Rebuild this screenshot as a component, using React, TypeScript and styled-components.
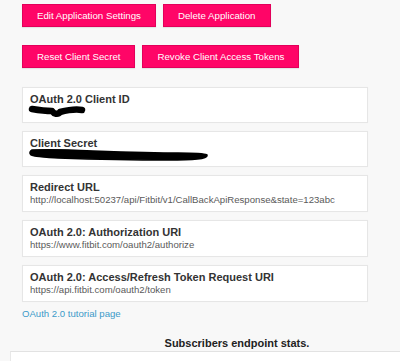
import React from 'react';
import styled, { createGlobalStyle } from 'styled-components';

const GlobalStyle = createGlobalStyle`
  html, body {
    margin: 0;
    padding: 0;
    background: #f8f8f8;
    font-family: "Liberation Sans", Arial, sans-serif;
  }
`;

const Page = styled.div`
  width: 400px;
  height: 361px;
  overflow: hidden;
  padding-left: 10px;
  box-sizing: border-box;
`;

const Content = styled.div`
  padding: 4px 0 0 12px;
`;

const ButtonRow = styled.div`
  display: flex;
  gap: 7px;
  margin-bottom: ${(p: { $gap?: number }) => p.$gap ?? 0}px;
`;

const PinkButton = styled.button`
  height: 23px;
  padding: 0 14px;
  background: #ff0567;
  border: 1px solid #e2005a;
  border-radius: 0;
  color: #fff;
  font-family: "Liberation Sans", Arial, sans-serif;
  font-size: 9.7px;
  line-height: 21px;
  cursor: pointer;
  box-shadow: 0 1px 1px rgba(0, 0, 0, 0.08);
`;

const CardList = styled.div`
  display: flex;
  flex-direction: column;
  gap: 8px;
  width: 346px;
  margin-top: 19px;
`;

const Card = styled.div`
  background: #fff;
  border: 1px solid #e6e6e6;
  padding: 5px 7px 6px;
  box-shadow: 0 0 1px rgba(0, 0, 0, 0.04);
`;

const CardTitle = styled.div`
  font-size: 11px;
  line-height: 13px;
  font-weight: bold;
  color: #333;
`;

const CardValue = styled.div`
  font-size: 9.6px;
  line-height: 11px;
  color: #5a5a5a;
  white-space: nowrap;
`;

const Redacted = styled.svg`
  display: block;
  overflow: visible;
  margin-left: -2px;
`;

const TutorialLink = styled.a`
  display: inline-block;
  margin-top: 6px;
  font-size: 9.6px;
  line-height: 11px;
  color: #3c9ac8;
  text-decoration: none;
`;

const StatsHeading = styled.div`
  margin-top: 16px;
  padding-left: 64px;
  text-align: center;
  font-size: 11px;
  line-height: 13px;
  font-weight: bold;
  color: #222;
`;

const StatsBox = styled.div`
  margin-top: 1px;
  height: 40px;
  background: #fff;
  border-top: 1px solid #e2e2e2;
  border-left: 1px solid #e8e8e8;
`;

const uris = [
  { title: 'Redirect URL', value: 'http://localhost:50237/api/Fitbit/v1/CallBackApiResponse&state=123abc' },
  { title: 'OAuth 2.0: Authorization URI', value: 'https://www.fitbit.com/oauth2/authorize' },
  { title: 'OAuth 2.0: Access/Refresh Token Request URI', value: 'https://api.fitbit.com/oauth2/token' },
];

const App: React.FC = () => {
  return (
    <Page>
      <GlobalStyle />
      <Content>
        <ButtonRow $gap={18}>
          <PinkButton>Edit Application Settings</PinkButton>
          <PinkButton>Delete Application</PinkButton>
        </ButtonRow>
        <ButtonRow>
          <PinkButton>Reset Client Secret</PinkButton>
          <PinkButton>Revoke Client Access Tokens</PinkButton>
        </ButtonRow>

        <CardList>
          <Card>
            <CardTitle>OAuth 2.0 Client ID</CardTitle>
            {/* marker scribble over the id */}
            <Redacted width="60" height="10" viewBox="0 0 60 10">
              <path
                d="M4 3 C 10 4, 18 5, 24 5 C 26 8, 30 9, 32 6 C 40 4, 48 3, 54 4"
                stroke="#000"
                strokeWidth="6.5"
                fill="none"
                strokeLinecap="round"
                strokeLinejoin="round"
              />
            </Redacted>
          </Card>
          <Card>
            <CardTitle>Client Secret</CardTitle>
            <Redacted width="182" height="10" viewBox="0 0 182 10">
              <path
                d="M4 0 C 25 -1, 45 0, 65 1 C 95 2, 125 3, 150 3 C 165 3, 175 3, 179 5 C 180 9, 165 10, 140 10 C 100 10, 60 9, 30 8 C 15 7, 6 7, 3 5 C 1 3, 2 1, 4 0 Z"
                fill="#000"
                stroke="#000"
                strokeWidth="1.5"
                strokeLinejoin="round"
              />
            </Redacted>
          </Card>
          {uris.map(u => (
            <Card key={u.title}>
              <CardTitle>{u.title}</CardTitle>
              <CardValue>{u.value}</CardValue>
            </Card>
          ))}
        </CardList>

        <TutorialLink href="#">OAuth 2.0 tutorial page</TutorialLink>
      </Content>
      <StatsHeading>Subscribers endpoint stats.</StatsHeading>
      <StatsBox />
    </Page>
  );
};

export default App;
